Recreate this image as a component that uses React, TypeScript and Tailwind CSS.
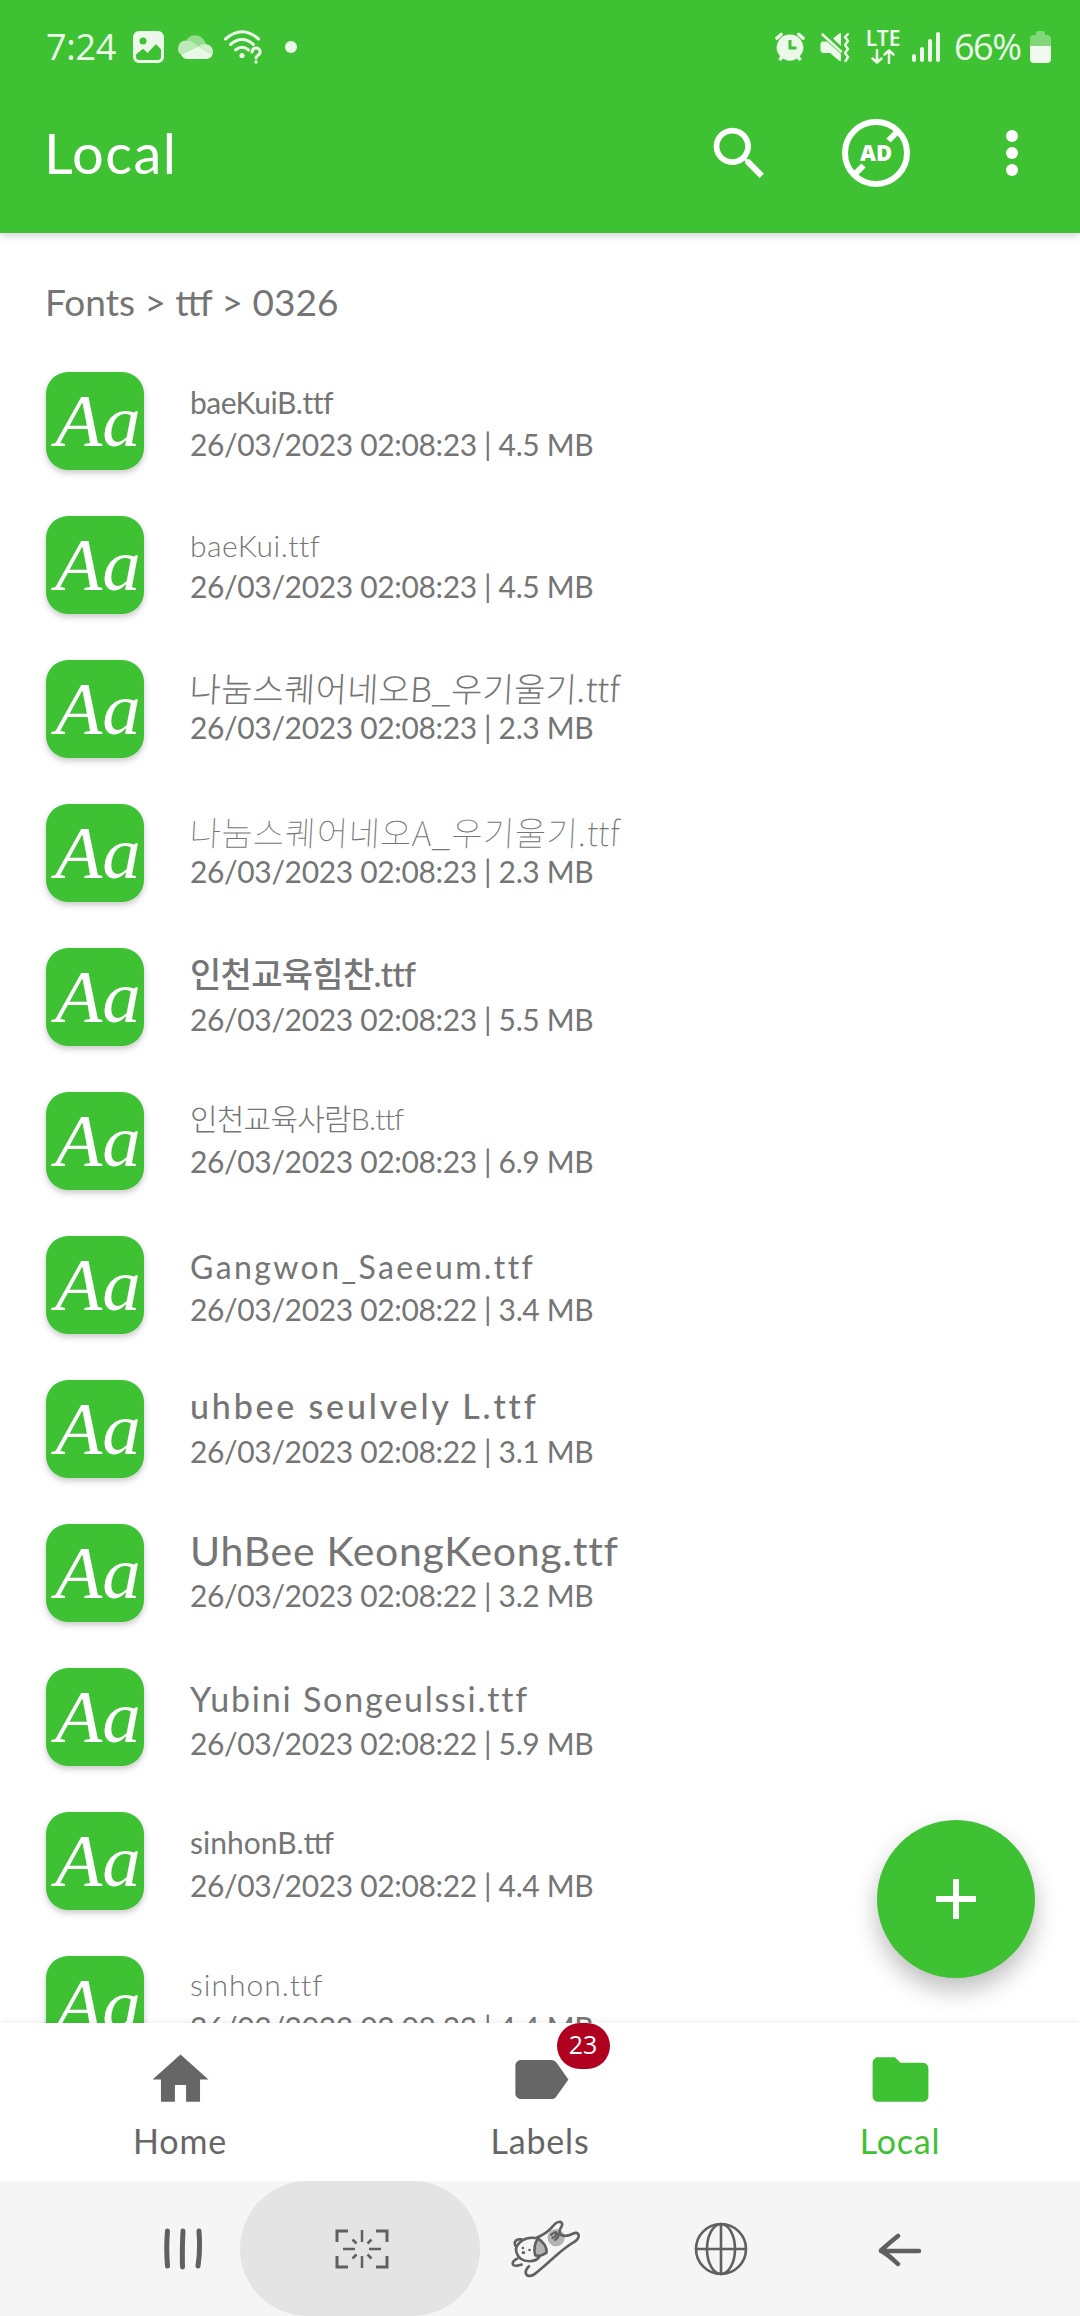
import React, { ReactNode } from "react";

type FontFile = {
  name: string;
  info: string;
  nameClass: string;
};

const files: FontFile[] = [
  {
    name: "baeKuiB.ttf",
    info: "26/03/2023 02:08:23 | 4.5 MB",
    nameClass: "h-[52px] text-[30px] leading-[61px] tracking-[-0.5px]",
  },
  {
    name: "baeKui.ttf",
    info: "26/03/2023 02:08:23 | 4.5 MB",
    nameClass: "h-[50px] text-[30px] leading-[59px] tracking-[0.5px] font-light",
  },
  {
    name: "나눔스퀘어네오B_우기울기.ttf",
    info: "26/03/2023 02:08:23 | 2.3 MB",
    nameClass:
      "h-[47px] text-[34px] leading-[56px] tracking-[0.2px] font-light -skew-x-3 font-['Noto_Sans_CJK_KR']",
  },
  {
    name: "나눔스퀘어네오A_우기울기.ttf",
    info: "26/03/2023 02:08:23 | 2.3 MB",
    nameClass:
      "h-[47px] text-[34px] leading-[56px] tracking-[0.5px] font-thin -skew-x-3 font-['Noto_Sans_CJK_KR']",
  },
  {
    name: "인천교육힘찬.ttf",
    info: "26/03/2023 02:08:23 | 5.5 MB",
    nameClass: "h-[51px] text-[34px] leading-[52px] tracking-[-0.7px] font-medium",
  },
  {
    name: "인천교육사람B.ttf",
    info: "26/03/2023 02:08:23 | 6.9 MB",
    nameClass: "h-[49px] text-[30px] leading-[52px] tracking-[-0.8px] font-light",
  },
  {
    name: "Gangwon_Saeeum.ttf",
    info: "26/03/2023 02:08:22 | 3.4 MB",
    nameClass: "h-[53px] text-[32px] leading-[62px] tracking-[2.4px]",
  },
  {
    name: "uhbee seulvely L.ttf",
    info: "26/03/2023 02:08:22 | 3.1 MB",
    nameClass: "h-[51px] text-[34px] leading-[52px] tracking-[2.8px] font-medium",
  },
  {
    name: "UhBee KeongKeong.ttf",
    info: "26/03/2023 02:08:22 | 3.2 MB",
    nameClass: "h-[51px] text-[41px] leading-[53px] tracking-[0.7px]",
  },
  {
    name: "Yubini Songeulssi.ttf",
    info: "26/03/2023 02:08:22 | 5.9 MB",
    nameClass: "h-[55px] text-[34px] leading-[61px] tracking-[1.8px]",
  },
  {
    name: "sinhonB.ttf",
    info: "26/03/2023 02:08:22 | 4.4 MB",
    nameClass: "h-[53px] text-[30px] leading-[61px]",
  },
  {
    name: "sinhon.ttf",
    info: "26/03/2023 02:08:22 | 4.4 MB",
    nameClass: "h-[51px] text-[30px] leading-[57px] tracking-[1px] font-light",
  },
];

const StatusBar = () => {
  return (
    <div className="flex h-[94px] items-center pr-[29px] pl-[46px] text-white/90">
      <span className="w-[72px] font-['Open_Sans'] text-[36px] leading-none tracking-[-0.3px] whitespace-nowrap">
        7:24
      </span>
      <svg className="ml-[15px] h-8 w-[31px]" viewBox="0 0 31 32">
        <path
          fill="currentColor"
          fillRule="evenodd"
          d="M6 0h19a6 6 0 0 1 6 6v20a6 6 0 0 1-6 6H6a6 6 0 0 1-6-6V6a6 6 0 0 1 6-6zM10 6.500a3.500 3.500 0 1 0 0 7 3.500 3.500 0 0 0 0-7zM3 23.500V26q0 3 3.500 3h18q3.500 0 3.500-3v-7.500l-4-4.500q-1-1-2 0l-7.500 8-3.500-3.500q-1-1-2 0z"
        />
      </svg>
      <svg className="ml-[14px] h-6 w-[35px]" viewBox="0 0 35 24" fill="#fff">
        <path opacity=".45" d="M8 5.500C13-2.500 25-1 28 9q-4 0-8 2.500L13 7q-2-1.500-5-1.500z" />
        <path opacity=".65" d="M8.500 5.500q3.500 0 6 2l6 3.800L3 19.500q-3-2-3-5.500 0-8.500 8.500-8.500z" />
        <path opacity=".75" d="M20.500 11.300q3.500-2.300 6.500-2.300 8 .7 8 8.200 0 1.500-.5 2.500z" />
        <path opacity=".88" d="M3 19.500l17.500-8.200 14 8.400q-2 4.300-7 4.300h-19Q5 23.500 3 19.500z" />
      </svg>
      <svg
        className="ml-[11px] h-[34px] w-[38px]"
        viewBox="0 0 38 34"
        fill="none"
        stroke="currentColor"
        strokeWidth="3"
        strokeLinecap="round"
      >
        <path d="M1.500 9q16.500-14.500 33 0M6.500 14.500q11.500-10 23 0M11.500 20q6.500-5.500 13 0" />
        <circle cx="18" cy="25.500" r="2.600" fill="currentColor" stroke="none" />
        <path d="M28 22q.5-4 4-4t4.200 3.500q0 2.500-2.500 4-1.700 1-1.700 2.500" />
        <circle cx="32" cy="32" r="1.700" fill="currentColor" stroke="none" />
      </svg>
      <span className="ml-[23px] size-3 rounded-full bg-current" />

      <svg className="ml-auto h-[30px] w-[30px]" viewBox="0 0 30 30">
        <path
          fill="currentColor"
          fillRule="evenodd"
          d="M15 2.500a13 13 0 0 1 9.800 21.800l2 3-2.600 1.800-2.200-2.600a13 13 0 0 1-14 0l-2.200 2.600-2.600-1.800 2-3A13 13 0 0 1 15 2.500zM13.500 8v9.500h8v-3h-5V8z"
        />
        <path
          stroke="currentColor"
          strokeWidth="3.200"
          strokeLinecap="round"
          d="M1.800 6.200l4.500-4M28.200 6.200l-4.500-4"
        />
      </svg>
      <svg className="ml-[15px] h-[30px] w-[30px]" viewBox="0 0 30 30">
        <path
          fill="currentColor"
          d="M3 9.500h4L21 22v6q0 2-1.800.8L10 21H3.500Q.5 21 .5 18v-5.500q0-3 2.500-3zM13 6.500l6.500-5.200q1.500-1 1.500.8v12z"
        />
        <path
          fill="none"
          stroke="currentColor"
          strokeWidth="2.400"
          strokeLinecap="round"
          strokeLinejoin="round"
          d="M2.500 2.500L21 19.500M28 2l-3 3 3 4-3 4 3 4-3 4 3 4-2.500 4"
        />
      </svg>
      <div className="ml-[17px] flex w-8 flex-col items-center">
        <span className="font-['Noto_Sans'] text-[21px] leading-[17px] font-semibold">
          LTE
        </span>
        <svg
          className="mt-0.5 h-[15px] w-[24px]"
          viewBox="0 0 24 15"
          fill="none"
          stroke="currentColor"
          strokeWidth="2.500"
          strokeLinecap="round"
          strokeLinejoin="round"
        >
          <path d="M6 1v12M1.500 9.500L6 13.500l4.500-4M18 14V2M13.500 5.500L18 1.500l4.500 4" />
        </svg>
      </div>
      <div className="ml-[13px] flex h-[30px] items-end gap-1">
        <span className="h-2 w-1 rounded-full bg-current" />
        <span className="h-[15px] w-1 rounded-full bg-current" />
        <span className="h-[23px] w-1 rounded-full bg-current" />
        <span className="h-[30px] w-1 rounded-full bg-current" />
      </div>
      <span className="ml-[14px] w-[68px] font-['Open_Sans'] text-[36px] leading-none tracking-[-1.5px] whitespace-nowrap">
        66%
      </span>
      <svg className="ml-[8px] h-8 w-[21px]" viewBox="0 0 21 32" fill="#fff">
        <path
          opacity=".35"
          d="M6 2q0-2 2-2h5q2 0 2 2v2h2q4 0 4 4v7H0V8q0-4 4-4h2z"
        />
        <path opacity=".92" d="M0 15h21v13q0 4-4 4H4q-4 0-4-4z" />
      </svg>
    </div>
  );
};

const Toolbar = () => {
  return (
    <div className="flex h-[139px] items-center pr-[62px] pb-[21px] pl-[44px] text-white">
      <h1 className="text-[56px] leading-[70px] tracking-[1.4px]">Local</h1>
      <svg className="ml-auto size-[69px]" viewBox="0 0 24 24">
        <path
          fill="currentColor"
          d="M15.500 14h-.79l-.28-.27C15.410 12.590 16 11.110 16 9.500 16 5.910 13.090 3 9.500 3S3 5.910 3 9.500 5.910 16 9.500 16c1.610 0 3.090-.59 4.230-1.570l.27.28v.79l5 4.990L20.490 19l-4.990-5zm-6 0C7.010 14 5 11.990 5 9.500S7.010 5 9.500 5 14 7.010 14 9.500 11.990 14 9.500 14z"
        />
      </svg>
      <svg className="ml-[67px] size-[70px]" viewBox="0 0 70 70">
        <circle cx="35" cy="35" r="31" fill="none" stroke="currentColor" strokeWidth="6" />
        <path stroke="currentColor" strokeWidth="6" d="M57.500 12.500L47.500 22.500M12.500 57.500l10-10" />
        <text
          x="35"
          y="43"
          textAnchor="middle"
          fill="currentColor"
          className="font-['Open_Sans'] text-[22px] font-extrabold"
        >
          AD
        </text>
      </svg>
      <div className="ml-[95px] flex flex-col gap-[5px]">
        <span className="size-3 rounded-full bg-white" />
        <span className="size-3 rounded-full bg-white" />
        <span className="size-3 rounded-full bg-white" />
      </div>
    </div>
  );
};

const FileRow = ({ name, info, nameClass }: FontFile) => {
  return (
    <li className="flex h-36 shrink-0 pl-[46px]">
      <div className="flex size-[98px] shrink-0 justify-center rounded-[22px] bg-[#3ec132] shadow-[0_3px_6px_rgba(0,0,0,0.22)]">
        <span className="translate-x-[3px] scale-x-104 font-['Liberation_Serif'] text-[74px] leading-[98px] text-white italic">
          Aa
        </span>
      </div>
      <div className="ml-[46px] whitespace-nowrap">
        <p className={nameClass}>{name}</p>
        <p className="text-[30px] leading-10 tracking-[-0.35px]">{info}</p>
      </div>
    </li>
  );
};

type TabProps = {
  label: string;
  path: string;
  active?: boolean;
  children?: ReactNode;
};

const Tab = ({ label, path, active, children }: TabProps) => {
  return (
    <div
      className={
        active
          ? "flex flex-col items-center text-[#3ec132]"
          : "flex flex-col items-center text-[#666666]"
      }
    >
      <div className="relative mt-[23px]">
        <svg className="size-[67px]" viewBox="0 0 24 24" fill="currentColor">
          <path d={path} />
        </svg>
        {children}
      </div>
      <span className="mt-2 text-[34px] leading-10 tracking-[0.8px]">
        {label}
      </span>
    </div>
  );
};

const BottomNav = () => {
  return (
    <nav className="relative grid h-[158px] grid-cols-3 bg-white shadow-[0_-2px_6px_rgba(0,0,0,0.06)]">
      <Tab label="Home" path="M10 20v-6h4v6h5v-8h3L12 3 2 12h3v8z" />
      <Tab
        label="Labels"
        path="M17.630 5.840C17.270 5.330 16.670 5 16 5L5 5.010C3.900 5.010 3 5.900 3 7v10c0 1.100.9 1.990 2 1.990L16 19c.67 0 1.270-.33 1.630-.84L22 12l-4.370-6.160z"
      >
        <span className="absolute -top-[23px] left-[50px] flex h-[46px] w-[53px] items-center justify-center rounded-full bg-[#b00020] pb-0.5 font-['Open_Sans'] text-[25px] text-white">
          23
        </span>
      </Tab>
      <Tab
        active
        label="Local"
        path="M10 4H4c-1.100 0-1.990.9-1.990 2L2 18c0 1.100.9 2 2 2h16c1.100 0 2-.9 2-2V8c0-1.100-.9-2-2-2h-8l-2-2z"
      />
    </nav>
  );
};

const SystemBar = () => {
  return (
    <div className="relative grid h-[135px] grid-cols-5 bg-[#f5f5f5] px-[90px] text-[#606060]">
      <div className="flex items-center justify-center pl-1.5">
        <svg
          className="h-[42px] w-[40px]"
          viewBox="0 0 40 42"
          fill="none"
          stroke="currentColor"
          strokeWidth="5"
          strokeLinecap="round"
        >
          <path d="M4.500 3q-1.500 17 0 35M20 3q-1 17-.5 36M36 3q1.500 20-1 35" />
        </svg>
      </div>
      <div className="flex items-center justify-center">
        <div className="flex h-full w-60 shrink-0 items-center justify-center rounded-full bg-[#e4e4e4]">
          <svg
            className="ml-1 h-10 w-[54px]"
            viewBox="0 0 54 40"
            fill="none"
            stroke="currentColor"
            strokeWidth="3"
          >
            <path d="M2 13V2h11M41 2h11v11M52 27v11H41M13 38H2V27" />
            <path
              strokeWidth="2.500"
              d="M27 1v12M27 27v12M8 20h12M34 20h12M17.500 10.500l4 4M36.500 10.500l-4 4M17.500 29.500l4-4M36.500 29.500l-4-4"
            />
          </svg>
        </div>
      </div>
      <div className="flex items-center justify-center pl-[13px]">
        <svg
          className="h-[62px] w-[73px]"
          viewBox="90 90 220 186"
          fill="none"
          stroke="currentColor"
          strokeWidth="8"
          strokeLinecap="round"
          strokeLinejoin="round"
        >
          <circle cx="229" cy="149" r="26" fill="#b4b4b4" stroke="none" />
          <path d="M170 149q30-12 46-31 14-18 25-17 10 4 4 15-12 17 0 25 14 6 34-4 14-7 18 4 1 10-12 20-22 12-62 47-42 38-58 50-12 10-24 4-10-11 6-27" />
          <path d="M124 154q-16-2-20 10 0 8 6 12M112 212q-17 8-13 18 4 7 26 0" />
          <path d="M152 149c-28 0-46 18-44 38 2 22 18 33 40 33 20 0 36-8 40-32 3-24-12-39-36-39z" fill="#f5f5f5" stroke="none" />
          <path d="M176 152q-30-8-50 6-22 16-17 34 8 28 40 28 20 0 30-14" />
          <path fill="#b4b4b4" d="M174 152c-10 14-12 34-8 50q16 6 34-8c2-14-8-34-26-42z" />
          <path strokeWidth="7" d="M214 140q10-8 14-8 6 10-10 18M226 134q16 4 8 14l-8 8" />
          <path d="M129 180v.1M149 186v.1M129 194h3" />
        </svg>
      </div>
      <div className="flex items-center justify-center">
        <svg
          className="ml-px size-[54px]"
          viewBox="0 0 54 54"
          fill="none"
          stroke="currentColor"
          strokeWidth="2.600"
        >
          <circle cx="27" cy="27" r="25" />
          <ellipse cx="27" cy="27" rx="14" ry="25" />
          <path d="M27 2v50M2 27h50" />
        </svg>
      </div>
      <div className="flex items-center justify-center">
        <svg
          className="mt-0.5 h-[36px] w-[44px]"
          viewBox="0 0 44 36"
          fill="none"
          stroke="currentColor"
          strokeWidth="4.500"
          strokeLinecap="round"
          strokeLinejoin="round"
        >
          <path d="M41 19H3M20 4Q10 12 3 18.500 12 24 20 32" />
        </svg>
      </div>
    </div>
  );
};

const App = () => {
  return (
    <div className="flex h-[2316px] w-[1080px] flex-col overflow-hidden bg-white font-['Lato','Noto_Sans_CJK_KR',sans-serif]">
      <header className="relative z-10 h-[233px] shrink-0 bg-[#3ec132] shadow-[0_2px_8px_rgba(0,0,0,0.2)]">
        <StatusBar />
        <Toolbar />
      </header>
      <main className="relative flex min-h-0 flex-1 flex-col overflow-hidden text-[#757575]">
        <p className="h-[139px] shrink-0 pt-[45px] pl-[45px] text-[37px] leading-[48px]">
          Fonts &gt; ttf &gt; 0326
        </p>
        <ul className="flex flex-col">
          {files.map((file) => (
            <FileRow key={file.name} {...file} />
          ))}
        </ul>
        <button className="absolute right-[45px] bottom-[45px] flex size-[158px] items-center justify-center rounded-full bg-[#3ec132] shadow-[0_12px_24px_rgba(0,0,0,0.26)]">
          <svg className="size-10" viewBox="0 0 40 40" stroke="#fff" strokeWidth="6">
            <path d="M20 0v40M0 20h40" />
          </svg>
        </button>
      </main>
      <BottomNav />
      <SystemBar />
    </div>
  );
};

export default App;
